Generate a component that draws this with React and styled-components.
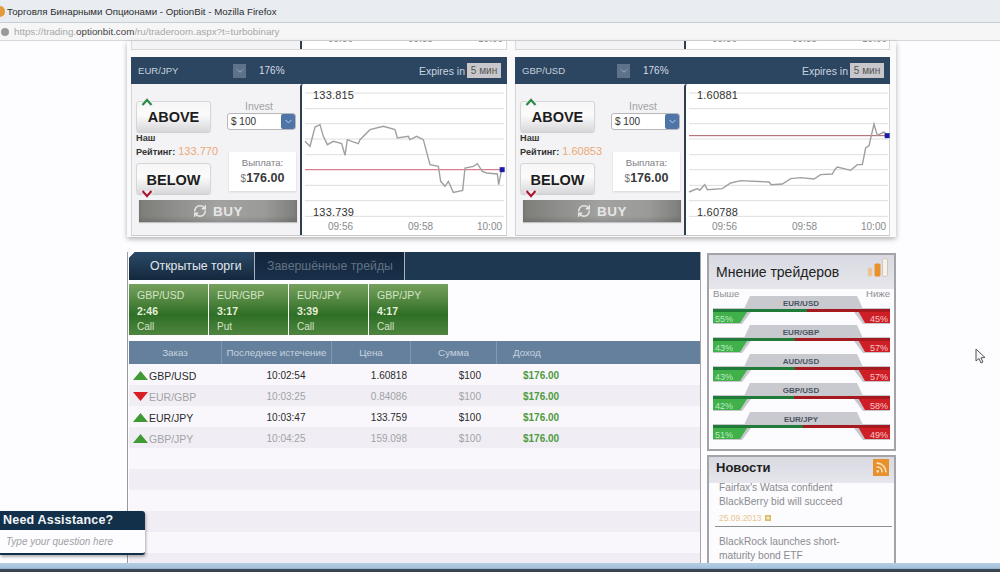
import React from "react";
import styled, { createGlobalStyle } from "styled-components";
import { RefreshCw, ChevronDown, Rss, Plus } from "lucide-react";

const GlobalStyle = createGlobalStyle`
    html, body {
        margin: 0;
        padding: 0;
        background: #fdfcfe;
        font-family: "Liberation Sans", Arial, sans-serif;
    }
`;

const Page = styled.div`
    position: relative;
    width: 1000px;
    height: 572px;
    overflow: hidden;
    display: flex;
    flex-direction: column;
    background: #fdfcfe;
`;

/* browser chrome */
const TitleBar = styled.div`
    height: 22px;
    flex: none;
    display: flex;
    align-items: center;
    gap: 2px;
    background: #e9edf1;
    font-size: 9.7px;
    color: #2c2c2c;
`;

const FoxIcon = styled.div`
    width: 5px;
    height: 11px;
    border-radius: 0 6px 6px 0;
    background: #e39a3b;
`;

const AddressBar = styled.div`
    height: 19px;
    flex: none;
    display: flex;
    align-items: center;
    gap: 5px;
    padding-left: 1px;
    box-sizing: border-box;
    background: #f6f6f7;
    border-top: 1px solid #c9ced4;
    border-bottom: 1px solid #d8d8d8;
    font-size: 9.8px;
    color: #a6a6a6;
`;

const Globe = styled.div`
    width: 8px;
    height: 8px;
    border-radius: 50%;
    background: #9a9a9a;
`;

const Domain = styled.span`
    color: #444;
`;

/* page */
const Content = styled.div`
    flex: 1;
    min-height: 0;
    padding-left: 127px;
    display: flex;
    flex-direction: column;
`;

const TradeArea = styled.div`
    width: 769px;
    height: 196px;
    flex: none;
    box-sizing: border-box;
    padding: 0 6px 0 4px;
    background: #fafafb;
    box-shadow: 0 2px 5px rgba(0, 0, 0, 0.3);
`;

const CutRow = styled.div`
    display: grid;
    grid-template-columns: 376px 375px;
    column-gap: 8px;
    height: 16px;
`;

const CutPanel = styled.div`
    height: 9px;
    display: flex;
    box-sizing: border-box;
    border: 1px solid #d8d8d8;
    border-top: none;
    background: #f3f3f6;
`;

const CutLeft = styled.div`
    width: 168px;
`;

const CutChart = styled.div`
    flex: 1;
    overflow: hidden;
    background: #fff;
    border-left: 2px solid #2d3f52;
    display: flex;
    font-size: 10px;
    line-height: 11px;
    color: #8a8a8a;
`;

const CutTime = styled.span`
    margin-top: -8px;
    margin-left: ${(p) => p.$left}px;
`;

const PanelRow = styled.div`
    display: grid;
    grid-template-columns: 376px 375px;
    column-gap: 8px;
`;

const Panel = styled.div`
    height: 178px;
    display: flex;
    flex-direction: column;
    border-right: 1px solid #d5d5d8;
    border-bottom: 1px solid #c9c9cc;
    border-left: 1px solid #d5d5d8;
    background: #f3f3f6;
`;

const PanelHeader = styled.div`
    height: 27px;
    flex: none;
    margin: 0 -1px;
    display: flex;
    align-items: center;
    background: #2c4560;
    color: #c5d0dc;
    font-size: 9.6px;
`;

const PairName = styled.div`
    width: 102px;
    padding-left: 7px;
    box-sizing: border-box;
`;

const PairPicker = styled.div`
    width: 13px;
    height: 14px;
    display: flex;
    align-items: center;
    justify-content: center;
    background: #5e7289;
    color: #a9b8c8;
`;

const Percent = styled.div`
    margin-left: 13px;
    font-size: 10px;
    color: #d3dce6;
`;

const Expires = styled.div`
    margin-left: auto;
    margin-right: 6px;
    display: flex;
    align-items: center;
    gap: 2px;
    font-size: 10.5px;
    color: #c9d5e1;
`;

const ExpireBox = styled.div`
    width: 34px;
    height: 15px;
    line-height: 15px;
    text-align: center;
    background: #c8c8cc;
    color: #555;
    font-size: 10px;
`;

const PanelBody = styled.div`
    flex: 1;
    min-height: 0;
    display: flex;
`;

const OrderSide = styled.div`
    width: 168px;
    flex: none;
    box-sizing: border-box;
    padding: 17px 3px 0 4px;
`;

const OrderGrid = styled.div`
    display: grid;
    grid-template-columns: 75px 69px;
    column-gap: 16px;
`;

const OrderColumn = styled.div`
    display: flex;
    flex-direction: column;
`;

const ActionButton = styled.div`
    position: relative;
    height: 31px;
    box-sizing: border-box;
    display: flex;
    align-items: center;
    justify-content: center;
    padding-top: ${(p) => (p.$down ? "2px" : "1px")};
    border: 1px solid #d6d6d8;
    border-radius: 3px;
    background: linear-gradient(#f6f6f7, #fbfbfb 45%, #d9d9dc);
    box-shadow: 0 1px 1px rgba(0, 0, 0, 0.15);
    font-size: 14.5px;
    font-weight: bold;
    color: #1d1d1d;
`;

const Notch = styled.svg`
    position: absolute;
    left: 3px;
    ${(p) => (p.$down ? "bottom: -6px;" : "top: -5px;")}
`;

const Rating = styled.div`
    height: 31px;
    font-size: 9.2px;
    line-height: 12.5px;
    font-weight: bold;
    color: #333;
    white-space: nowrap;
`;

const RatingValue = styled.span`
    margin-left: 3px;
    font-size: 11px;
    font-weight: normal;
    color: #eca874;
`;

const InvestLabel = styled.div`
    height: 12px;
    margin-top: -1px;
    padding-right: 5px;
    line-height: 12px;
    text-align: center;
    font-size: 10.5px;
    color: #a2a2a6;
`;

const InvestSelect = styled.div`
    height: 17px;
    margin-top: 1px;
    display: flex;
    align-items: center;
    justify-content: space-between;
    padding-left: 3px;
    box-sizing: border-box;
    border: 1px solid #b7b7bc;
    border-radius: 3px;
    background: #fff;
    font-size: 10px;
    color: #333;
`;

const SelectArrow = styled.div`
    width: 14px;
    height: 15px;
    display: flex;
    align-items: center;
    justify-content: center;
    border-radius: 2px;
    background: #4f74a8;
    color: #c8d6e8;
`;

const Payout = styled.div`
    height: 39px;
    margin: 22px 0 0 2px;
    padding-top: 4px;
    box-sizing: border-box;
    text-align: center;
    background: #fff;
    box-shadow: 0 1px 2px rgba(0, 0, 0, 0.12);
`;

const PayoutLabel = styled.div`
    font-size: 9.6px;
    line-height: 14px;
    color: #808084;
`;

const PayoutValue = styled.div`
    font-size: 12.5px;
    line-height: 17px;
    font-weight: bold;
    color: #3a3a3a;
`;

const Dollar = styled.span`
    font-size: 10px;
    font-weight: normal;
    color: #777;
`;

const BuyButton = styled.div`
    height: 22px;
    margin: 6px 0 0 3px;
    display: flex;
    align-items: center;
    justify-content: center;
    gap: 6px;
    background: linear-gradient(90deg, #7d7d7a, #a3a3a1 50%, #9a9a98 80%, #7d7d7a);
    box-shadow: inset 0 -3px 4px rgba(0, 0, 0, 0.12), 0 1px 1px rgba(0, 0, 0, 0.2);
    font-size: 13.5px;
    font-weight: bold;
    letter-spacing: 0.5px;
    color: #e6e6e6;
`;

const ChartBox = styled.div`
    flex: 1;
    min-width: 0;
    background: #fff;
    border-left: 2px solid #2d3f52;
    border-top-left-radius: 3px;
`;

const ChartSvg = styled.svg`
    display: block;
`;

const ChartText = styled.text`
    font-family: "Liberation Sans", Arial, sans-serif;
    font-size: ${(p) => p.$size}px;
    fill: ${(p) => p.$color};
    letter-spacing: ${(p) => p.$spacing || 0}px;
`;

/* lower part of the page */
const LowerRow = styled.div`
    flex: 1;
    min-height: 0;
    margin-top: 16px;
    display: flex;
    align-items: stretch;
`;

const TradesPanel = styled.div`
    width: 571px;
    flex: none;
    padding-left: 1px;
    margin-top: -1px;
    display: flex;
    flex-direction: column;
    border-left: 1px solid #9a9a9e;
    border-right: 1px solid #a5a5aa;
`;

const TabBar = styled.div`
    height: 28px;
    flex: none;
    display: flex;
    background: #1f3851;
    clip-path: polygon(6px 0, 100% 0, 100% 100%, 0 100%, 0 6px);
`;

const Tab = styled.div`
    width: ${(p) => p.$width}px;
    height: 100%;
    box-sizing: border-box;
    padding-left: ${(p) => p.$pad}px;
    display: flex;
    align-items: center;
    white-space: nowrap;
    border-right: 1px solid #aab4be;
    background: ${(p) =>
        p.$active ? "linear-gradient(#2b4a68, #14283c)" : "linear-gradient(#13263a, #18304a)"};
    color: ${(p) => (p.$active ? "#e2e7ee" : "#627282")};
    font-size: 12.3px;
`;

const CardRow = styled.div`
    height: 51px;
    flex: none;
    margin-top: 4px;
    display: flex;
    gap: 1px;
`;

const Card = styled.div`
    width: 79px;
    box-sizing: border-box;
    padding: 4px 0 0 8px;
    background: linear-gradient(#74a05c, #5b8d48 25%, #2f6f25 60%, #4f8540);
    color: #d3e4c6;
    font-size: 10.5px;
    line-height: 15.5px;
`;

const CardPair = styled.div`
    font-size: 10.5px;
`;

const CardTime = styled.div`
    font-weight: bold;
    color: #e6efdc;
`;

const CardKind = styled.div`
    font-size: 10px;
`;

const TableHead = styled.div`
    height: 23px;
    flex: none;
    margin-top: 6px;
    display: grid;
    grid-template-columns: 93px 110px 79px 86px 1fr;
    background: #64809d;
    color: #c8d3df;
    font-size: 9.8px;
`;

const HeadCell = styled.div`
    display: flex;
    align-items: center;
    justify-content: ${(p) => (p.$left ? "flex-start" : "center")};
    padding-left: ${(p) => (p.$left ? "16px" : "0")};
    border-right: ${(p) => (p.$left ? "none" : "1px solid #8298ae")};
`;

const TableBody = styled.div`
    flex: 1;
    min-height: 0;
    overflow: hidden;
`;

const TradeRow = styled.div`
    height: 21px;
    box-sizing: border-box;
    padding-top: 2px;
    display: grid;
    grid-template-columns: 116px 82px 80px 74px 1fr;
    align-items: center;
    background: ${(p) => (p.$odd ? "#f0eef4" : "#f9f7fc")};
    color: ${(p) => (p.$dim ? "#a2a2a6" : "#2a2a2a")};
    font-size: 10px;
`;

const PairCell = styled.div`
    display: flex;
    align-items: center;
    padding-left: 4px;
    font-size: 10.5px;
`;

const TimeCell = styled.div`
    text-align: center;
`;

const NumberCell = styled.div`
    text-align: right;
`;

const ProfitCell = styled.div`
    padding-left: 42px;
    font-size: 10px;
    font-weight: bold;
    color: #4f9a40;
`;

const SideColumn = styled.div`
    width: 189px;
    flex: none;
    margin-left: 6px;
    display: flex;
    flex-direction: column;
    gap: 4px;
`;

const SideBox = styled.div`
    border: 2px solid #a3a3a8;
    ${(p) => p.$open && "border-bottom: none; flex: 1; min-height: 0; overflow: hidden;"}
    background: #fcfbfd;
`;

const BoxHead = styled.div`
    height: ${(p) => p.$height}px;
    box-sizing: border-box;
    display: flex;
    align-items: center;
    justify-content: space-between;
    padding: 0 5px ${(p) => p.$lift || 0}px 7px;
    background: linear-gradient(#d9d9e2, #e6e6ec);
    color: #222;
    font-size: 14px;
`;

const NewsTitle = styled.span`
    font-weight: bold;
    font-size: 13px;
`;

const OpinionIcon = styled.svg`
    margin-bottom: 8px;
`;

const VoteLabels = styled.div`
    height: 17px;
    display: flex;
    justify-content: space-between;
    padding: 0 4px;
    margin-top: -2px;
    font-size: 9.6px;
    line-height: 14px;
    color: #8f8f94;
`;

const Gauges = styled.div`
    margin-top: -8px;
    padding: 0 0 8px 4px;
`;

const GaugeSvg = styled.svg`
    display: block;
`;

const GaugeText = styled.text`
    font-family: "Liberation Sans", Arial, sans-serif;
    font-size: ${(p) => (p.$bold ? 8 : 9)}px;
    font-weight: ${(p) => (p.$bold ? "bold" : "normal")};
    fill: ${(p) => p.$color};
`;

const RssBadge = styled.div`
    width: 16px;
    height: 17px;
    display: flex;
    align-items: center;
    justify-content: center;
    background: #e8912c;
    color: #fbe3c0;
`;

const NewsList = styled.div`
    margin-top: -2px;
    padding: 0 2px 0 10px;
    font-size: 10.2px;
    line-height: 14px;
    color: #8b8b90;
`;

const NewsDate = styled.div`
    display: flex;
    align-items: center;
    gap: 3px;
    margin-top: 3.5px;
    padding-bottom: 2.5px;
    font-size: 8.5px;
    line-height: 11px;
    color: #eac48e;
`;

const PlusBox = styled.span`
    width: 6px;
    height: 6px;
    display: flex;
    align-items: center;
    justify-content: center;
    background: #dcbb60;
    color: #fff;
`;

const NewsRule = styled.div`
    height: 1px;
    margin: 0 0 8px -4px;
    background: #8f8f92;
`;

/* overlays */
const HelpBox = styled.div`
    position: absolute;
    left: 0;
    top: 511px;
    width: 145px;
    border-bottom: 2px solid #12304a;
    box-shadow: 1px 2px 3px rgba(0, 0, 0, 0.3);
    border-radius: 0 3px 3px 0;
    background: #fdfcfe;
`;

const HelpTitle = styled.div`
    height: 19px;
    line-height: 19px;
    padding-left: 3px;
    background: #12304a;
    border-radius: 0 3px 0 0;
    color: #f2f5f8;
    font-size: 12.5px;
    font-weight: bold;
    letter-spacing: 0.2px;
`;

const HelpInput = styled.div`
    height: 23px;
    line-height: 23px;
    padding-left: 6px;
    font-size: 10px;
    font-style: italic;
    color: #a0a0a4;
`;

const Pointer = styled.svg`
    position: absolute;
    left: 975px;
    top: 348px;
`;

const TaskBar = styled.div`
    height: 9px;
    flex: none;
    background: linear-gradient(#b4cde4, #a3c0da 60%, #3c4b58 70%, #33404c);
`;

const CHARTS = [
    {
        origin: [30, 133],
        high: "133.815",
        low: "133.739",
        rate: 390,
        rateColor: "#d9697c",
        line: [
            [45, 305], [60, 320], [75, 262], [90, 255], [100, 290], [112, 315], [130, 305], [155, 312],
            [165, 347], [172, 300], [185, 305], [205, 312], [210, 300], [240, 270], [280, 260], [315, 270],
            [322, 295], [355, 290], [360, 300], [380, 290], [400, 300], [420, 375], [445, 380], [452, 425],
            [465, 440], [475, 425], [490, 458], [518, 452], [525, 385], [550, 380], [562, 372], [577, 395],
            [590, 400], [622, 403], [626, 435], [635, 390],
        ],
    },
    {
        origin: [250, 133],
        high: "1.60881",
        low: "1.60788",
        rate: 288,
        rateColor: "#a85c62",
        line: [
            [265, 457], [290, 447], [297, 452], [312, 435], [320, 450], [365, 447], [390, 430], [420, 423],
            [505, 427], [512, 435], [545, 433], [570, 417], [600, 414], [640, 418], [660, 405], [695, 403],
            [702, 390], [710, 382], [750, 392], [770, 375], [785, 375], [795, 325], [805, 318], [820, 253],
            [830, 287], [850, 277], [858, 287],
        ],
    },
];

const PANELS = [
    { pair: "EUR/JPY", rating: "133.770", chart: CHARTS[0] },
    { pair: "GBP/USD", rating: "1.60853", chart: CHARTS[1] },
];

const CARDS = [
    { pair: "GBP/USD", time: "2:46", kind: "Call" },
    { pair: "EUR/GBP", time: "3:17", kind: "Put" },
    { pair: "EUR/JPY", time: "3:39", kind: "Call" },
    { pair: "GBP/JPY", time: "4:17", kind: "Call" },
];

const TRADES = [
    { pair: "GBP/USD", time: "10:02:54", price: "1.60818", up: true },
    { pair: "EUR/GBP", time: "10:03:25", price: "0.84086", up: false, dim: true },
    { pair: "EUR/JPY", time: "10:03:47", price: "133.759", up: true },
    { pair: "GBP/JPY", time: "10:04:25", price: "159.098", up: true, dim: true },
];

const OPINIONS = [
    { pair: "EUR/USD", up: 55, down: 45 },
    { pair: "EUR/GBP", up: 43, down: 57 },
    { pair: "AUD/USD", up: 43, down: 57 },
    { pair: "GBP/USD", up: 42, down: 58 },
    { pair: "EUR/JPY", up: 51, down: 49 },
];

const GRID_LINES = [160, 207, 252, 298, 345, 390, 437, 483, 530];

// the chart coordinates were read off the picture at 3x, hence the divide
const Chart = ({ chart }) => {
    const [ox, oy] = chart.origin;
    const px = (x) => (x - ox) / 3;
    const py = (y) => (y - oy) / 3;
    const end = chart.line[chart.line.length - 1];
    return (
        <ChartBox>
            <ChartSvg width="205" height="150" viewBox="2 0 205 150">
                {GRID_LINES.map((y) => (
                    <line key={y} x1="5" x2="204" y1={py(y)} y2={py(y)} stroke="#dedede" />
                ))}
                <line x1="5" x2={px(end[0])} y1={py(chart.rate)} y2={py(chart.rate)} stroke={chart.rateColor} />
                <polyline
                    fill="none"
                    stroke="#a0a0a0"
                    strokeWidth="1.4"
                    points={chart.line.map(([x, y]) => `${px(x)},${py(y)}`).join(" ")}
                />
                <rect x={px(end[0]) - 2} y={py(chart.rate) - 2.5} width="5" height="5" fill="#1c1ca8" />
                <ChartText x="13" y="15" $size={11} $color="#333" $spacing={0.2}>{chart.high}</ChartText>
                <ChartText x="13" y="132" $size={11} $color="#333" $spacing={0.2}>{chart.low}</ChartText>
                <ChartText x="28" y="146" $size={10} $color="#8a8a8a">09:56</ChartText>
                <ChartText x="108" y="146" $size={10} $color="#8a8a8a">09:58</ChartText>
                <ChartText x="177" y="146" $size={10} $color="#8a8a8a">10:00</ChartText>
            </ChartSvg>
        </ChartBox>
    );
};

const TradePanel = ({ pair, rating, chart }) => (
    <Panel>
        <PanelHeader>
            <PairName>{pair}</PairName>
            <PairPicker>
                <ChevronDown size={10} strokeWidth={2} />
            </PairPicker>
            <Percent>176%</Percent>
            <Expires>
                Expires in
                <ExpireBox>5 мин</ExpireBox>
            </Expires>
        </PanelHeader>
        <PanelBody>
            <OrderSide>
                <OrderGrid>
                    <OrderColumn>
                        <ActionButton>
                            <Notch width="14" height="10" viewBox="0 0 14 10">
                                <path d="M0 8 L7 0 L14 8 Z" fill="#f4f4f6" />
                                <path d="M2.5 8 L7 3 L11.5 8" fill="none" stroke="#2f8a48" strokeWidth="2.2" />
                            </Notch>
                            ABOVE
                        </ActionButton>
                        <Rating>
                            Наш
                            <br />
                            Рейтинг:
                            <RatingValue>{rating}</RatingValue>
                        </Rating>
                        <ActionButton $down>
                            BELOW
                            <Notch $down width="14" height="10" viewBox="0 0 14 10">
                                <path d="M0 2 L7 10 L14 2 Z" fill="#f4f4f6" />
                                <path d="M2.5 2 L7 7 L11.5 2" fill="none" stroke="#a81c30" strokeWidth="2.2" />
                            </Notch>
                        </ActionButton>
                    </OrderColumn>
                    <OrderColumn>
                        <InvestLabel>Invest</InvestLabel>
                        <InvestSelect>
                            $ 100
                            <SelectArrow>
                                <ChevronDown size={11} strokeWidth={2} />
                            </SelectArrow>
                        </InvestSelect>
                        <Payout>
                            <PayoutLabel>Выплата:</PayoutLabel>
                            <PayoutValue>
                                <Dollar>$</Dollar>176.00
                            </PayoutValue>
                        </Payout>
                    </OrderColumn>
                </OrderGrid>
                <BuyButton>
                    <RefreshCw size={14} strokeWidth={2.6} />
                    BUY
                </BuyButton>
            </OrderSide>
            <Chart chart={chart} />
        </PanelBody>
    </Panel>
);

const TrendArrow = ({ up }) => (
    <svg width="16" height="11" viewBox="0 0 16 11">
        {up ? <path d="M0 10 L7.5 1 L15 10 Z" fill="#3f9a34" /> : <path d="M0 1 L15 1 L7.5 10 Z" fill="#d81f26" />}
    </svg>
);

const Gauge = ({ pair, up, down }) => {
    const split = 39 + up;
    return (
        <GaugeSvg width="177" height="29" viewBox="0 0 177 29">
            <path d="M37 0 L144 0 L150 13 L31 13 Z" fill="#c9c9d0" />
            <path d="M0 12 L177 12 L177 28 L150 28 L141 16 L38 16 L29 28 L0 28 Z" fill="#c6c6cc" />
            <path d="M0 13 H36 L27 27 H0 Z" fill="#3fb04a" />
            <path d="M177 13 H144 L152 27 H177 Z" fill="#cf1f26" />
            <rect x="0" y="13" width={split} height="3" fill="#207a38" />
            <rect x={split} y="13" width={177 - split} height="3" fill="#a51a1e" />
            <GaugeText x="88" y="9.5" textAnchor="middle" $bold $color="#4a5560">{pair}</GaugeText>
            <GaugeText x="2" y="26" $color="#bdeac0">{up}%</GaugeText>
            <GaugeText x="175" y="26" textAnchor="end" $color="#f7c6c6">{down}%</GaugeText>
        </GaugeSvg>
    );
};

const OpinionBars = () => (
    <OpinionIcon width="22" height="20" viewBox="0 0 22 20">
        <rect x="0.5" y="9.5" width="5" height="9" rx="1.5" fill="#efc38c" stroke="#dcdce0" />
        <rect x="7.5" y="5.5" width="6" height="13" rx="1.5" fill="#e8902a" />
        <rect x="15.5" y="0.5" width="5" height="18" rx="2" fill="#f2f2f4" stroke="#d8c4a8" />
    </OpinionIcon>
);

export default function App() {
    return (
        <Page>
            <GlobalStyle />
            <TitleBar>
                <FoxIcon />
                Торговля Бинарными Опционами - OptionBit - Mozilla Firefox
            </TitleBar>
            <AddressBar>
                <Globe />
                <span>
                    https://trading.<Domain>optionbit.com</Domain>/ru/traderoom.aspx?t=turbobinary
                </span>
            </AddressBar>
            <Content>
                <TradeArea>
                    <CutRow>
                        {PANELS.map((panel) => (
                            <CutPanel key={panel.pair}>
                                <CutLeft />
                                <CutChart>
                                    <CutTime $left={26}>09:56</CutTime>
                                    <CutTime $left={55}>09:58</CutTime>
                                    <CutTime $left={45}>10:00</CutTime>
                                </CutChart>
                            </CutPanel>
                        ))}
                    </CutRow>
                    <PanelRow>
                        {PANELS.map((panel) => (
                            <TradePanel key={panel.pair} {...panel} />
                        ))}
                    </PanelRow>
                </TradeArea>
                <LowerRow>
                    <TradesPanel>
                        <TabBar>
                            <Tab $active $width={126} $pad={21}>Открытые торги</Tab>
                            <Tab $width={150} $pad={12}>Завершённые трейды</Tab>
                        </TabBar>
                        <CardRow>
                            {CARDS.map((card) => (
                                <Card key={card.pair}>
                                    <CardPair>{card.pair}</CardPair>
                                    <CardTime>{card.time}</CardTime>
                                    <CardKind>{card.kind}</CardKind>
                                </Card>
                            ))}
                        </CardRow>
                        <TableHead>
                            <HeadCell>Заказ</HeadCell>
                            <HeadCell>Последнее истечение</HeadCell>
                            <HeadCell>Цена</HeadCell>
                            <HeadCell>Сумма</HeadCell>
                            <HeadCell $left>Доход</HeadCell>
                        </TableHead>
                        <TableBody>
                            {TRADES.map((trade, i) => (
                                <TradeRow key={trade.pair} $odd={i % 2 === 1} $dim={trade.dim}>
                                    <PairCell>
                                        <TrendArrow up={trade.up} />
                                        {trade.pair}
                                    </PairCell>
                                    <TimeCell>{trade.time}</TimeCell>
                                    <NumberCell>{trade.price}</NumberCell>
                                    <NumberCell>$100</NumberCell>
                                    <ProfitCell>$176.00</ProfitCell>
                                </TradeRow>
                            ))}
                            {[4, 5, 6, 7, 8, 9].map((i) => (
                                <TradeRow key={i} $odd={i % 2 === 1} />
                            ))}
                        </TableBody>
                    </TradesPanel>
                    <SideColumn>
                        <SideBox>
                            <BoxHead $height={34}>
                                Мнение трейдеров
                                <OpinionBars />
                            </BoxHead>
                            <VoteLabels>
                                <span>Выше</span>
                                <span>Ниже</span>
                            </VoteLabels>
                            <Gauges>
                                {OPINIONS.map((row) => (
                                    <Gauge key={row.pair} {...row} />
                                ))}
                            </Gauges>
                        </SideBox>
                        <SideBox $open>
                            <BoxHead $height={26} $lift={5}>
                                <NewsTitle>Новости</NewsTitle>
                                <RssBadge>
                                    <Rss size={13} strokeWidth={3} />
                                </RssBadge>
                            </BoxHead>
                            <NewsList>
                                Fairfax's Watsa confident
                                <br />
                                BlackBerry bid will succeed
                                <NewsDate>
                                    25.09.2013
                                    <PlusBox>
                                        <Plus size={6} strokeWidth={3} />
                                    </PlusBox>
                                </NewsDate>
                                <NewsRule />
                                BlackRock launches short-
                                <br />
                                maturity bond ETF
                            </NewsList>
                        </SideBox>
                    </SideColumn>
                </LowerRow>
            </Content>
            <TaskBar />
            <HelpBox>
                <HelpTitle>Need Assistance?</HelpTitle>
                <HelpInput>Type your question here</HelpInput>
            </HelpBox>
            <Pointer width="12" height="17" viewBox="0 0 12 17">
                <path d="M1 1 L1 13 L4 10.5 L6 15 L8 14 L6 9.8 L10 9.5 Z" fill="#f4f4f4" stroke="#555" strokeWidth="1" />
            </Pointer>
        </Page>
    );
}
